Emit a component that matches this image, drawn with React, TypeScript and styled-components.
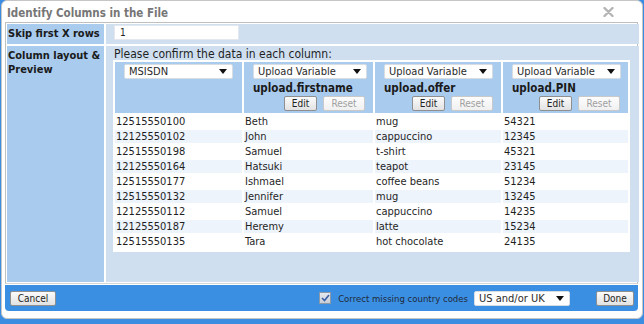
import React from "react";
import styled, { createGlobalStyle, css } from "styled-components";

const GlobalStyle = createGlobalStyle`
  html, body { margin: 0; padding: 0; }
  body {
    background: #3a8de0;
    font-family: "DejaVu Sans Condensed", "DejaVu Sans", sans-serif;
    font-stretch: condensed;
    color: #1f1f1f;
    width: 644px;
    height: 324px;
    overflow: hidden;
  }
`;

const Dialog = styled.div`
  box-sizing: border-box;
  width: 642px;
  margin: 0 0 0 1px;
  background: #fff;
  border: 1px solid #c6c6c6;
  border-radius: 6px;
  padding: 0 4px 7px 3px;
  display: flex;
  flex-direction: column;
`;

const TitleBar = styled.div`
  height: 21px;
  display: flex;
  align-items: center;
  justify-content: space-between;
  padding: 0 24px 0 2px;
`;

const Title = styled.div`
  font-size: 11.5px;
  font-weight: bold;
  color: #767676;
  padding-top: 2px;
`;

const Content = styled.div`
  display: grid;
  grid-template-columns: 97px 1fr;
  grid-template-rows: 20px 236px;
  gap: 2px;
  padding: 1px;
  border: 1px solid #bfbfbf;
  border-bottom-color: #d6d6d6;
`;

const Label = styled.div`
  background: #a9cbee;
  font-size: 11px;
  font-weight: bold;
  line-height: 14px;
  padding: 3px 1px 0 1px;
  color: #1a1a1a;
`;

const Cell = styled.div<{ $pt?: number }>`
  background: #cfdff0;
  padding: ${(p) => p.$pt ?? 2}px 9px 0 8px;
  font-size: 11px;
`;

const TextInput = styled.div`
  box-sizing: border-box;
  width: 125px;
  height: 15px;
  background: #fff;
  border: 1px solid #e4e8ee;
  font-size: 10px;
  line-height: 13px;
  padding-left: 5px;
`;

const Hint = styled.div`
  font-size: 12px;
  line-height: 12px;
  color: #1f1f1f;
`;

const Table = styled.table`
  background: #fff;
  border-spacing: 2px;
  table-layout: fixed;
  width: 516px;
  margin-left: -1px;
  padding-bottom: 2px;
`;

const HeadCell = styled.th`
  background: #a9cbee;
  height: 51px;
  padding: 0;
  vertical-align: top;
  text-align: left;
`;

const Select = styled.div<{ $w?: number; $fs?: number }>`
  box-sizing: border-box;
  height: 15px;
  width: ${(p) => p.$w ?? 109}px;
  background: #fff;
  border: 1px solid #d8dde4;
  border-radius: 2px;
  font-size: ${(p) => p.$fs ?? 11}px;
  font-weight: normal;
  line-height: 13px;
  padding: 0 5px 0 4px;
  color: #2a2a2a;
  display: flex;
  align-items: center;
  justify-content: space-between;
  white-space: nowrap;
`;

const Arrow = styled.span`
  width: 0;
  height: 0;
  border-left: 4px solid transparent;
  border-right: 4px solid transparent;
  border-top: 5px solid #111;
`;

const HeadInner = styled.div`
  padding: 2px 8px 2px 9px;
  display: flex;
  flex-direction: column;
  height: 47px;
`;

const VarName = styled.div`
  font-size: 11.5px;
  font-weight: bold;
  line-height: 16px;
  margin-top: 1px;
  color: #1a1a1a;
`;

const BtnRow = styled.div`
  display: flex;
  justify-content: flex-end;
  gap: 6px;
  margin-top: auto;
`;

const Button = styled.button<{ $disabled?: boolean; $w: number }>`
  box-sizing: border-box;
  width: ${(p) => p.$w}px;
  height: 15px;
  padding: 0;
  font-family: inherit;
  font-stretch: condensed;
  font-size: 10px;
  line-height: 13px;
  border-radius: 2px;
  border: 1px solid #8f8f8f;
  background: linear-gradient(#fbfbfb, #e2e2e2);
  color: #222;
  ${(p) =>
    p.$disabled &&
    css`
      border-color: #c9c9c9;
      color: #a0a0a0;
      background: linear-gradient(#fdfdfd, #f0f0f0);
    `}
`;

const DataCell = styled.td<{ $alt: boolean }>`
  height: 13px;
  padding: 0 0 0 1px;
  font-size: 11px;
  line-height: 13px;
  background: ${(p) => (p.$alt ? "#eef4fc" : "#fff")};
  color: #1f1f1f;
  white-space: nowrap;
`;

const Footer = styled.div`
  margin-top: 1px;
  height: 26px;
  background: #3b8fe2;
  border-radius: 0 0 4px 4px;
  display: flex;
  align-items: center;
  padding: 0 4px 0 5px;
`;

const Spacer = styled.div<{ $w?: number }>`
  flex: ${(p) => (p.$w ? `0 0 ${p.$w}px` : "1")};
`;

const Check = styled.span`
  box-sizing: border-box;
  width: 12px;
  height: 12px;
  border: 1px solid #8a98a8;
  background: linear-gradient(#e6e9ee, #c9ced6);
  display: inline-flex;
  align-items: center;
  justify-content: center;
  margin-right: 7px;
`;

const CheckLabel = styled.span`
  font-size: 9.5px;
  color: #1f2a3a;
  margin-right: 6px;
`;

const Close = () => (
  <svg width="11" height="10" viewBox="0 0 11 10">
    <path d="M1.5 1 L9.5 9 M9.5 1 L1.5 9" stroke="#b4b4b4" strokeWidth="2.4" strokeLinecap="round" />
  </svg>
);

const rows = [
  ["12515550100", "Beth", "mug", "54321"],
  ["12125550102", "John", "cappuccino", "12345"],
  ["12515550198", "Samuel", "t-shirt", "45321"],
  ["12125550164", "Hatsuki", "teapot", "23145"],
  ["12515550177", "Ishmael", "coffee beans", "51234"],
  ["12515550132", "Jennifer", "mug", "13245"],
  ["12125550112", "Samuel", "cappuccino", "14235"],
  ["12125550187", "Heremy", "latte", "15234"],
  ["12515550135", "Tara", "hot chocolate", "24135"],
];

const cols = [
  { sel: "MSISDN", name: null as string | null, w: 127, sw: 109 },
  { sel: "Upload Variable", name: "upload.firstname", w: 129, sw: 114 },
  { sel: "Upload Variable", name: "upload.offer", w: 126, sw: 109 },
  { sel: "Upload Variable", name: "upload.PIN", w: 125, sw: 109 },
];

export default function App() {
  return (
    <>
      <GlobalStyle />
      <Dialog>
        <TitleBar>
          <Title>Identify Columns in the File</Title>
          <Close />
        </TitleBar>
        <Content>
          <Label>Skip first X rows</Label>
          <Cell $pt={1}>
            <TextInput>1</TextInput>
          </Cell>
          <Label>
            Column layout &amp;
            <br />
            Preview
          </Label>
          <Cell>
            <Hint>Please confirm the data in each column:</Hint>
            <Table>
              <colgroup>
                {cols.map((c, i) => (
                  <col key={i} style={{ width: c.w }} />
                ))}
              </colgroup>
              <thead>
                <tr>
                  {cols.map((c, i) => (
                    <HeadCell key={i}>
                      <HeadInner>
                        <Select $w={c.sw}>
                          <span>{c.sel}</span>
                          <Arrow />
                        </Select>
                        {c.name && (
                          <>
                            <VarName>{c.name}</VarName>
                            <BtnRow>
                              <Button $w={33}>Edit</Button>
                              <Button $w={42} $disabled>
                                Reset
                              </Button>
                            </BtnRow>
                          </>
                        )}
                      </HeadInner>
                    </HeadCell>
                  ))}
                </tr>
              </thead>
              <tbody>
                {rows.map((r, i) => (
                  <tr key={i}>
                    {r.map((v, j) => (
                      <DataCell key={j} $alt={i % 2 === 1}>
                        {v}
                      </DataCell>
                    ))}
                  </tr>
                ))}
              </tbody>
            </Table>
          </Cell>
        </Content>
        <Footer>
          <Button $w={46}>Cancel</Button>
          <Spacer />
          <Check>
            <svg width="9" height="8" viewBox="0 0 9 8">
              <path d="M1 4 L3.5 6.5 L8 1" stroke="#3a5fa8" strokeWidth="1.6" fill="none" />
            </svg>
          </Check>
          <CheckLabel>Correct missing country codes</CheckLabel>
          <Select $w={96}>
            <span>US and/or UK</span>
            <Arrow />
          </Select>
          <Spacer $w={26} />
          <Button $w={38}>Done</Button>
        </Footer>
      </Dialog>
    </>
  );
}
